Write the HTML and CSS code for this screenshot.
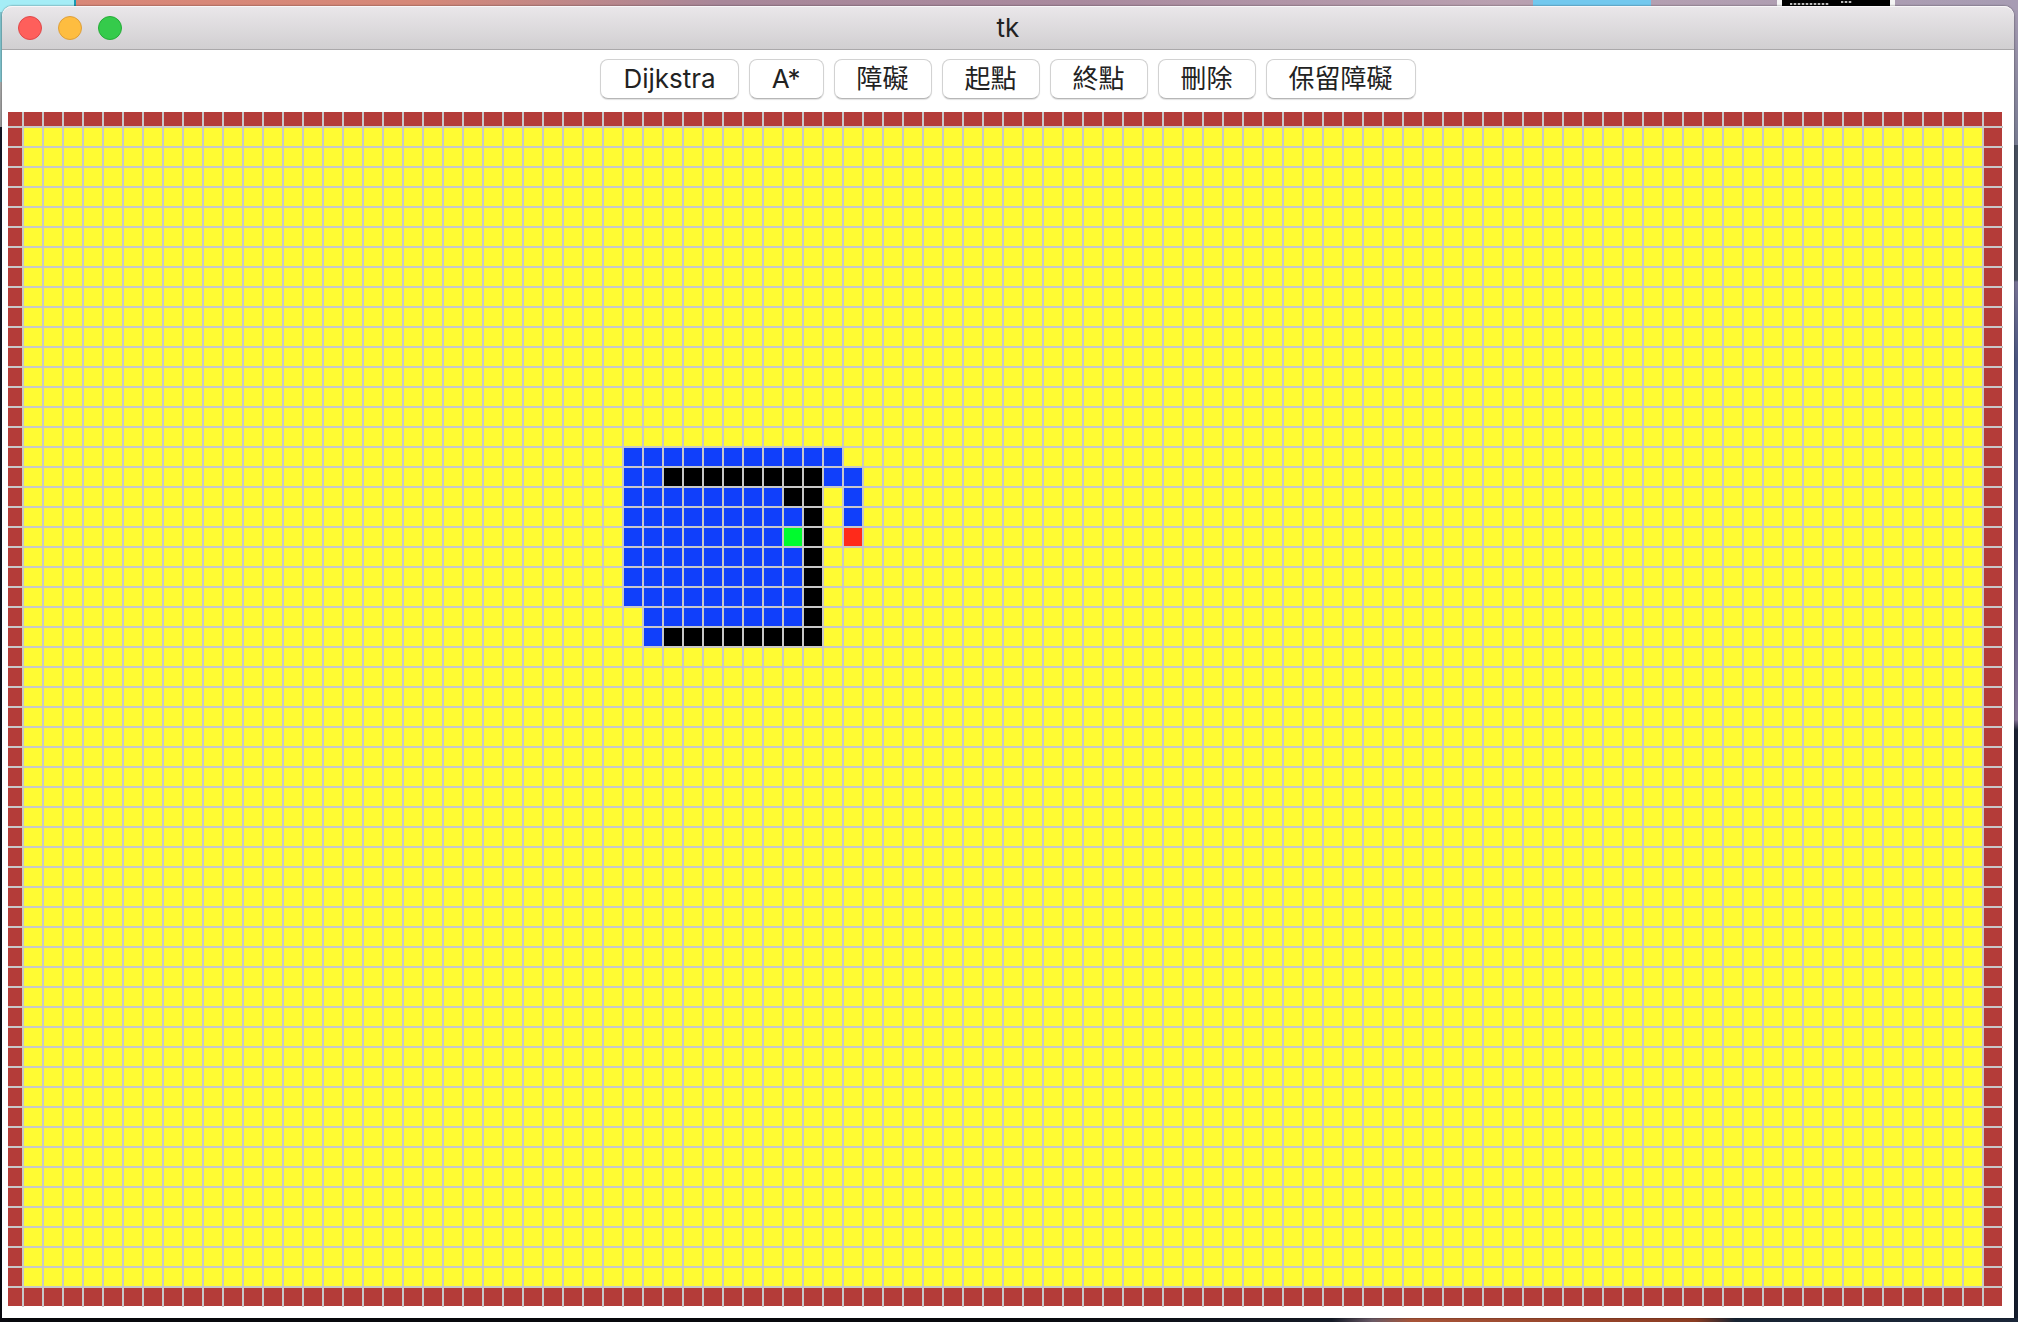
FILE: index.html
```html
<!DOCTYPE html>
<html lang="zh-Hant">
<head>
<meta charset="utf-8">
<title>tk</title>
<link rel="stylesheet" href="styles.css">
</head>
<body>
<main class="window">
  <header class="titlebar">
    <div class="lights">
      <button class="light close" type="button" aria-label="Close"></button>
      <button class="light minimize" type="button" aria-label="Minimize"></button>
      <button class="light expand" type="button" aria-label="Zoom"></button>
    </div>
    <h1 class="title">tk</h1>
  </header>
  <nav class="toolbar">
    <button class="tool" type="button">Dijkstra</button>
    <button class="tool" type="button">A*</button>
    <button class="tool" type="button">障礙</button>
    <button class="tool" type="button">起點</button>
    <button class="tool" type="button">終點</button>
    <button class="tool" type="button">刪除</button>
    <button class="tool" type="button">保留障礙</button>
  </nav>
  <!-- grid-area: row start / column start / row end / column end -->
  <section class="board">
    <div class="visited" style="grid-area: 17 / 31 / 18 / 42"></div>
    <div class="visited" style="grid-area: 18 / 31 / 25 / 40"></div>
    <div class="visited" style="grid-area: 25 / 32 / 27 / 40"></div>
    <div class="visited" style="grid-area: 18 / 41 / 19 / 43"></div>
    <div class="visited" style="grid-area: 19 / 42 / 21 / 43"></div>
    <div class="wall" style="grid-area: 18 / 33 / 19 / 41"></div>
    <div class="wall" style="grid-area: 19 / 39 / 20 / 41"></div>
    <div class="wall" style="grid-area: 20 / 40 / 26 / 41"></div>
    <div class="wall" style="grid-area: 26 / 33 / 27 / 41"></div>
    <div class="start" style="grid-area: 21 / 39 / 22 / 40"></div>
    <div class="goal" style="grid-area: 21 / 42 / 22 / 43"></div>
  </section>
</main>
</body>
</html>
```
FILE: styles.css
```css
* { box-sizing: border-box; }

body {
  margin: 0;
  padding: 6px 4px 4px 2px;
  font-family: Inter, "Noto Sans CJK TC", sans-serif;
  color: #222;
  background:
    repeating-linear-gradient(90deg, #bbb 0 2px, #333 2px 4px) 1790px 3px / 39px 2px no-repeat,
    repeating-linear-gradient(90deg, #bbb 0 2px, #333 2px 4px) 1841px 1px / 11px 2px no-repeat,
    linear-gradient(#000, #000) 1782px 0 / 108px 6px no-repeat,
    linear-gradient(#f4f4f4, #f4f4f4) 1777px 0 / 118px 6px no-repeat,
    linear-gradient(#72c8ee, #72c8ee) 1533px 0 / 118px 6px no-repeat,
    linear-gradient(#1999b2, #1999b2) 74px 0 / 2px 6px no-repeat,
    linear-gradient(#a5edf6, #a5edf6) 0 0 / 74px 12px no-repeat,
    linear-gradient(#7fc3cd 82px, #aaa 82px, #999 127px, #151725 127px, #0a0a10) 0 0 / 8px 100% no-repeat,
    linear-gradient(90deg, #d98778, #d58878 420px, #a88799 720px, #a98a9e 1080px, #b9a0b0 1500px, #a79cb3) 0 0 / 100% 10px no-repeat,
    linear-gradient(90deg, #08090d 0 50%, #141a26 66%, #6a5a66 68%, #a85438 70%, #8c3c22 84%, #182433 86%, #1b2638) 0 100% / 100% 4px no-repeat,
    linear-gradient(#a79cb3, #777b91 145px, #474f5e 145px 280px, #777394 282px, #4a5580 360px, #56598a 540px, #857396 720px, #1c2233 730px, #141c2c);
}

.window {
  background: #fff;
  border-radius: 10px 10px 0 0;
  padding-bottom: 12px;
  box-shadow: 0 0 2px rgba(0, 0, 0, 0.6);
}

.titlebar {
  display: grid;
  grid-template-columns: 1fr auto 1fr;
  align-items: center;
  height: 44px;
  padding: 0 16px;
  background: linear-gradient(#eae7ea, #d1cfd1);
  border-bottom: 1px solid #aaa8aa;
  border-radius: 10px 10px 0 0;
  box-shadow: inset 0 1px #f8f6f8;
}

.lights { display: flex; gap: 16px; }

.light {
  width: 24px;
  height: 24px;
  padding: 0;
  border: 1px solid;
  border-radius: 50%;
}
.close { background: #fe5f5b; border-color: #e0484a; }
.minimize { background: #febd40; border-color: #de9f3a; }
.expand { background: #35cb4b; border-color: #26ac38; }

.title {
  margin: 0;
  font-size: 26px;
  font-weight: 400;
  line-height: 32px;
}

.toolbar {
  display: flex;
  justify-content: center;
  gap: 10px;
  padding: 9px 6px 13px;
}

.tool {
  height: 40px;
  padding: 0 22px;
  font: inherit;
  font-size: 26px;
  line-height: 36px;
  color: inherit;
  background: #fff;
  border: 1px solid #d2d2d2;
  border-bottom-color: #b6b6b6;
  border-radius: 8px;
  box-shadow: 0 1px 1px rgba(0, 0, 0, 0.12);
}

/* The border is the outer wall; the pseudo-elements rule the lines over it. */
.board {
  position: relative;
  display: grid;
  grid-template-columns: repeat(auto-fill, 20px);
  grid-template-rows: repeat(58, 20px);
  margin: 0 12px 0 6px;
  border: solid #b43c39;
  border-width: 14px 20px 20px 14px;
  background: #fffb33;
}

.board::before,
.board::after {
  content: "";
  position: absolute;
  background-position: 14px 14px;
  background-size: 20px 20px;
}
.board::before {
  inset: -14px -20px -21px -14px;
  background-image: linear-gradient(90deg, #c8c8c8 2px, transparent 2px);
  z-index: 1;
}
.board::after {
  inset: -14px -21px -20px -14px;
  background-image: linear-gradient(#c8c8c8 2px, transparent 2px);
  z-index: 1;
}

.visited { background: #103ffb; }
.wall { background: #000; }
.start { background: #00fb2d; }
.goal { background: #ff2a1a; }
```
